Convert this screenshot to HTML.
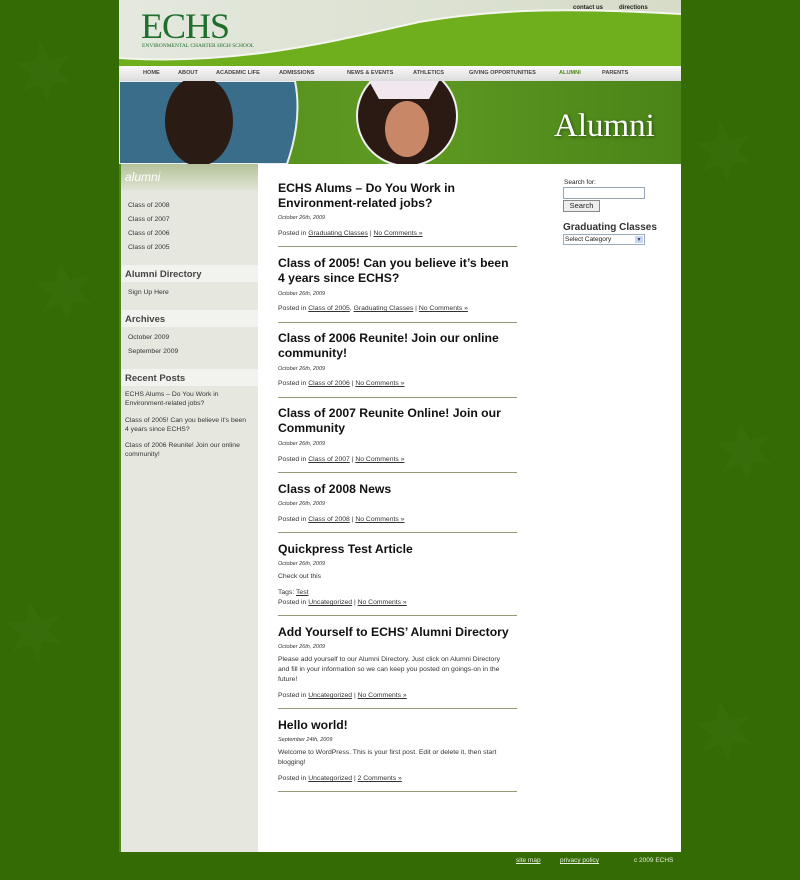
<!DOCTYPE html>
<html><head><meta charset="utf-8"><style>
*{margin:0;padding:0;box-sizing:border-box}
body{width:800px;height:880px;background:#356b05;font-family:"Liberation Sans",Arial,sans-serif;position:relative;overflow:hidden;color:#222}
.a{position:absolute;white-space:nowrap}
#wrap{position:absolute;left:119px;top:0;width:562px;height:852px;background:#fff}
#hdr{position:absolute;left:0;top:0;width:562px;height:66px;background:linear-gradient(90deg,#e4e8de,#d6dcc8)}
#nav{position:absolute;left:0;top:66px;width:562px;height:15px;background:linear-gradient(#fafafa,#dcdcdc);font-size:5.6px;font-weight:bold;color:#444}
#ban{position:absolute;left:0;top:81px;width:562px;height:83px;background:linear-gradient(90deg,#4f8a1c,#5f9a22 50%,#4a8418)}
#side{position:absolute;left:0;top:164px;width:139px;height:688px;background:#e6e8e0;border-left:2px solid #4d8a1a}
.sh{position:absolute;left:0;width:137px;height:17px;background:#f2f3ee;font-size:9.5px;font-weight:bold;color:#444;padding:4px 0 0 4px}
.sl{font-size:6.8px;color:#333}
.t{font-size:12.2px;font-weight:bold;color:#111;line-height:15px;white-space:normal;width:240px}
.d{font-size:5.5px;font-style:italic;color:#333}
.p{font-size:6.8px;color:#333}
.p u{color:#333}
.hr{position:absolute;left:159px;width:239px;height:1px;background:#8f9a78}
.x{font-size:6.8px;color:#333;line-height:10px;white-space:normal;width:235px}
</style></head><body>
<svg class="a" style="left:0;top:0" width="800" height="880"><g fill="#3d7510" opacity=".35">
<path d="M40 40l10 20 20-5-12 15 14 14-20-2-4 20-8-18-18 8 10-17-16-12 20-2z"/>
<path d="M720 120l10 20 20-5-12 15 14 14-20-2-4 20-8-18-18 8 10-17-16-12 20-2z"/>
<path d="M60 260l10 20 20-5-12 15 14 14-20-2-4 20-8-18-18 8 10-17-16-12 20-2z"/>
<path d="M740 420l10 20 20-5-12 15 14 14-20-2-4 20-8-18-18 8 10-17-16-12 20-2z"/>
<path d="M30 600l10 20 20-5-12 15 14 14-20-2-4 20-8-18-18 8 10-17-16-12 20-2z"/>
<path d="M720 700l10 20 20-5-12 15 14 14-20-2-4 20-8-18-18 8 10-17-16-12 20-2z"/></g></svg>
<div id="wrap">
<div id="hdr">
<svg class="a" style="left:0;top:0" width="562" height="66"><path d="M0 58 C120 66 220 40 300 22 C380 8 460 8 562 14 L562 66 L0 66Z" fill="#6fae1c"/><path d="M0 58 C120 66 220 40 300 22 C380 8 460 8 562 14" fill="none" stroke="#f4f6ee" stroke-width="2"/></svg>
<div class="a" style="left:22px;top:8px;font-family:'Liberation Serif',serif;font-size:36px;line-height:36px;color:#1e6e2c;letter-spacing:-1px">ECHS</div>
<div class="a" style="left:23px;top:43px;font-family:'Liberation Serif',serif;font-size:5.5px;color:#1e6e2c">ENVIRONMENTAL CHARTER HIGH SCHOOL</div>
<div class="a" style="left:454px;top:5px;font-size:6px;font-weight:bold;color:#222">contact us</div>
<div class="a" style="left:500px;top:5px;font-size:6px;font-weight:bold;color:#222">directions</div>
</div>
<div id="nav">
<span class="a" style="left:24px;top:4px">HOME</span><span class="a" style="left:59px;top:4px">ABOUT</span><span class="a" style="left:97px;top:4px">ACADEMIC LIFE</span><span class="a" style="left:160px;top:4px">ADMISSIONS</span><span class="a" style="left:228px;top:4px">NEWS &amp; EVENTS</span><span class="a" style="left:294px;top:4px">ATHLETICS</span><span class="a" style="left:350px;top:4px">GIVING OPPORTUNITIES</span><span class="a" style="left:440px;top:4px;color:#4a8a10">ALUMNI</span><span class="a" style="left:483px;top:4px">PARENTS</span>
</div>
<div id="ban">
<svg class="a" style="left:0;top:0" width="562" height="83">
<path d="M0 0 H176 C182 30 176 60 168 83 H0Z" fill="#3a6d8a"/>
<path d="M0 0 H176 C182 30 176 60 168 83 H0Z" fill="none" stroke="#e8eef0" stroke-width="2"/>
<ellipse cx="80" cy="40" rx="34" ry="45" fill="#2a1c14"/>
<circle cx="288" cy="35" r="50" fill="#2b1a14" stroke="#f0f0f0" stroke-width="2"/>
<ellipse cx="288" cy="48" rx="22" ry="28" fill="#c88868"/>
<path d="M250 0h70l-10 18h-50z" fill="#f0e8ee"/>
</svg>
<div class="a" style="left:435px;top:27px;font-family:'Liberation Serif',serif;font-size:33px;color:#fff;text-shadow:1px 1px 3px #2a4a10">Alumni</div>
</div>
<div id="side">
<div class="a" style="left:0;top:0;width:137px;height:26px;background:linear-gradient(#b4c29a,#dfe4d4);font-size:12px;font-style:italic;color:#fff;padding:6px 0 0 4px">alumni</div>
<div class="a sl" style="left:7px;top:38px">Class of 2008</div>
<div class="a sl" style="left:7px;top:52px">Class of 2007</div>
<div class="a sl" style="left:7px;top:66px">Class of 2006</div>
<div class="a sl" style="left:7px;top:80px">Class of 2005</div>
<div class="sh" style="top:101px">Alumni Directory</div>
<div class="a sl" style="left:7px;top:125px">Sign Up Here</div>
<div class="sh" style="top:146px">Archives</div>
<div class="a sl" style="left:7px;top:170px">October 2009</div>
<div class="a sl" style="left:7px;top:184px">September 2009</div>
<div class="sh" style="top:205px">Recent Posts</div>
<div class="a sl" style="left:4px;top:226px;line-height:9px">ECHS Alums – Do You Work in<br>Environment-related jobs?</div>
<div class="a sl" style="left:4px;top:252px;line-height:9px">Class of 2005! Can you believe it's been<br>4 years since ECHS?</div>
<div class="a sl" style="left:4px;top:277px;line-height:9px">Class of 2006 Reunite! Join our online<br>community!</div>
</div>

<div class="a t" style="left:159px;top:181px">ECHS Alums – Do You Work in Environment-related jobs?</div>
<div class="a d" style="left:159px;top:215px">October 26th, 2009</div>
<div class="a p" style="left:159px;top:230px">Posted in <u>Graduating Classes</u> | <u>No Comments »</u></div>
<div class="hr" style="top:246px"></div>

<div class="a t" style="left:159px;top:256px">Class of 2005! Can you believe it’s been 4 years since ECHS?</div>
<div class="a d" style="left:159px;top:291px">October 26th, 2009</div>
<div class="a p" style="left:159px;top:305px">Posted in <u>Class of 2005</u>, <u>Graduating Classes</u> | <u>No Comments »</u></div>
<div class="hr" style="top:322px"></div>

<div class="a t" style="left:159px;top:331px">Class of 2006 Reunite! Join our online community!</div>
<div class="a d" style="left:159px;top:366px">October 26th, 2009</div>
<div class="a p" style="left:159px;top:380px">Posted in <u>Class of 2006</u> | <u>No Comments »</u></div>
<div class="hr" style="top:397px"></div>

<div class="a t" style="left:159px;top:406px">Class of 2007 Reunite Online! Join our Community</div>
<div class="a d" style="left:159px;top:441px">October 26th, 2009</div>
<div class="a p" style="left:159px;top:456px">Posted in <u>Class of 2007</u> | <u>No Comments »</u></div>
<div class="hr" style="top:472px"></div>

<div class="a t" style="left:159px;top:482px">Class of 2008 News</div>
<div class="a d" style="left:159px;top:501px">October 26th, 2009</div>
<div class="a p" style="left:159px;top:516px">Posted in <u>Class of 2008</u> | <u>No Comments »</u></div>
<div class="hr" style="top:532px"></div>

<div class="a t" style="left:159px;top:542px">Quickpress Test Article</div>
<div class="a d" style="left:159px;top:561px">October 26th, 2009</div>
<div class="a p" style="left:159px;top:573px">Check out this</div>
<div class="a p" style="left:159px;top:589px">Tags: <u>Test</u></div>
<div class="a p" style="left:159px;top:599px">Posted in <u>Uncategorized</u> | <u>No Comments »</u></div>
<div class="hr" style="top:615px"></div>

<div class="a t" style="left:159px;top:625px">Add Yourself to ECHS’ Alumni Directory</div>
<div class="a d" style="left:159px;top:644px">October 26th, 2009</div>
<div class="a x" style="left:159px;top:655px">Please add yourself to our Alumni Directory.  Just click on Alumni Directory and fill in your information so we can keep you posted on goings-on in the future!</div>
<div class="a p" style="left:159px;top:692px">Posted in <u>Uncategorized</u> | <u>No Comments »</u></div>
<div class="hr" style="top:708px"></div>

<div class="a t" style="left:159px;top:718px">Hello world!</div>
<div class="a d" style="left:159px;top:737px">September 24th, 2009</div>
<div class="a x" style="left:159px;top:748px">Welcome to WordPress. This is your first post. Edit or delete it, then start blogging!</div>
<div class="a p" style="left:159px;top:775px">Posted in <u>Uncategorized</u> | <u>2 Comments »</u></div>
<div class="hr" style="top:791px"></div>

<div class="a" style="left:445px;top:179px;font-size:6.5px;color:#222">Search for:</div>
<div class="a" style="left:444px;top:187px;width:82px;height:12px;border:1px solid #9aa6b8;background:#fff"></div>
<div class="a" style="left:444px;top:200px;width:37px;height:12px;border:1px solid #888;background:#eee;font-size:7.5px;text-align:center;line-height:10px">Search</div>
<div class="a" style="left:444px;top:222px;font-size:10px;font-weight:bold;color:#333">Graduating Classes</div>
<div class="a" style="left:444px;top:234px;width:82px;height:11px;border:1px solid #9ab;background:#fff;font-size:6.5px;padding-left:1px;line-height:9px">Select Category<span style="position:absolute;right:1px;top:1px;width:8px;height:7px;background:#c8d8f0;font-size:5px;text-align:center;color:#335">▼</span></div>
</div>
<div class="a" style="left:516px;top:857px;font-size:6.5px;color:#e8f0e0;text-decoration:underline">site map</div>
<div class="a" style="left:560px;top:857px;font-size:6.5px;color:#e8f0e0;text-decoration:underline">privacy policy</div>
<div class="a" style="left:634px;top:857px;font-size:6.5px;color:#e8f0e0">c 2009 ECHS</div>
</body></html>
